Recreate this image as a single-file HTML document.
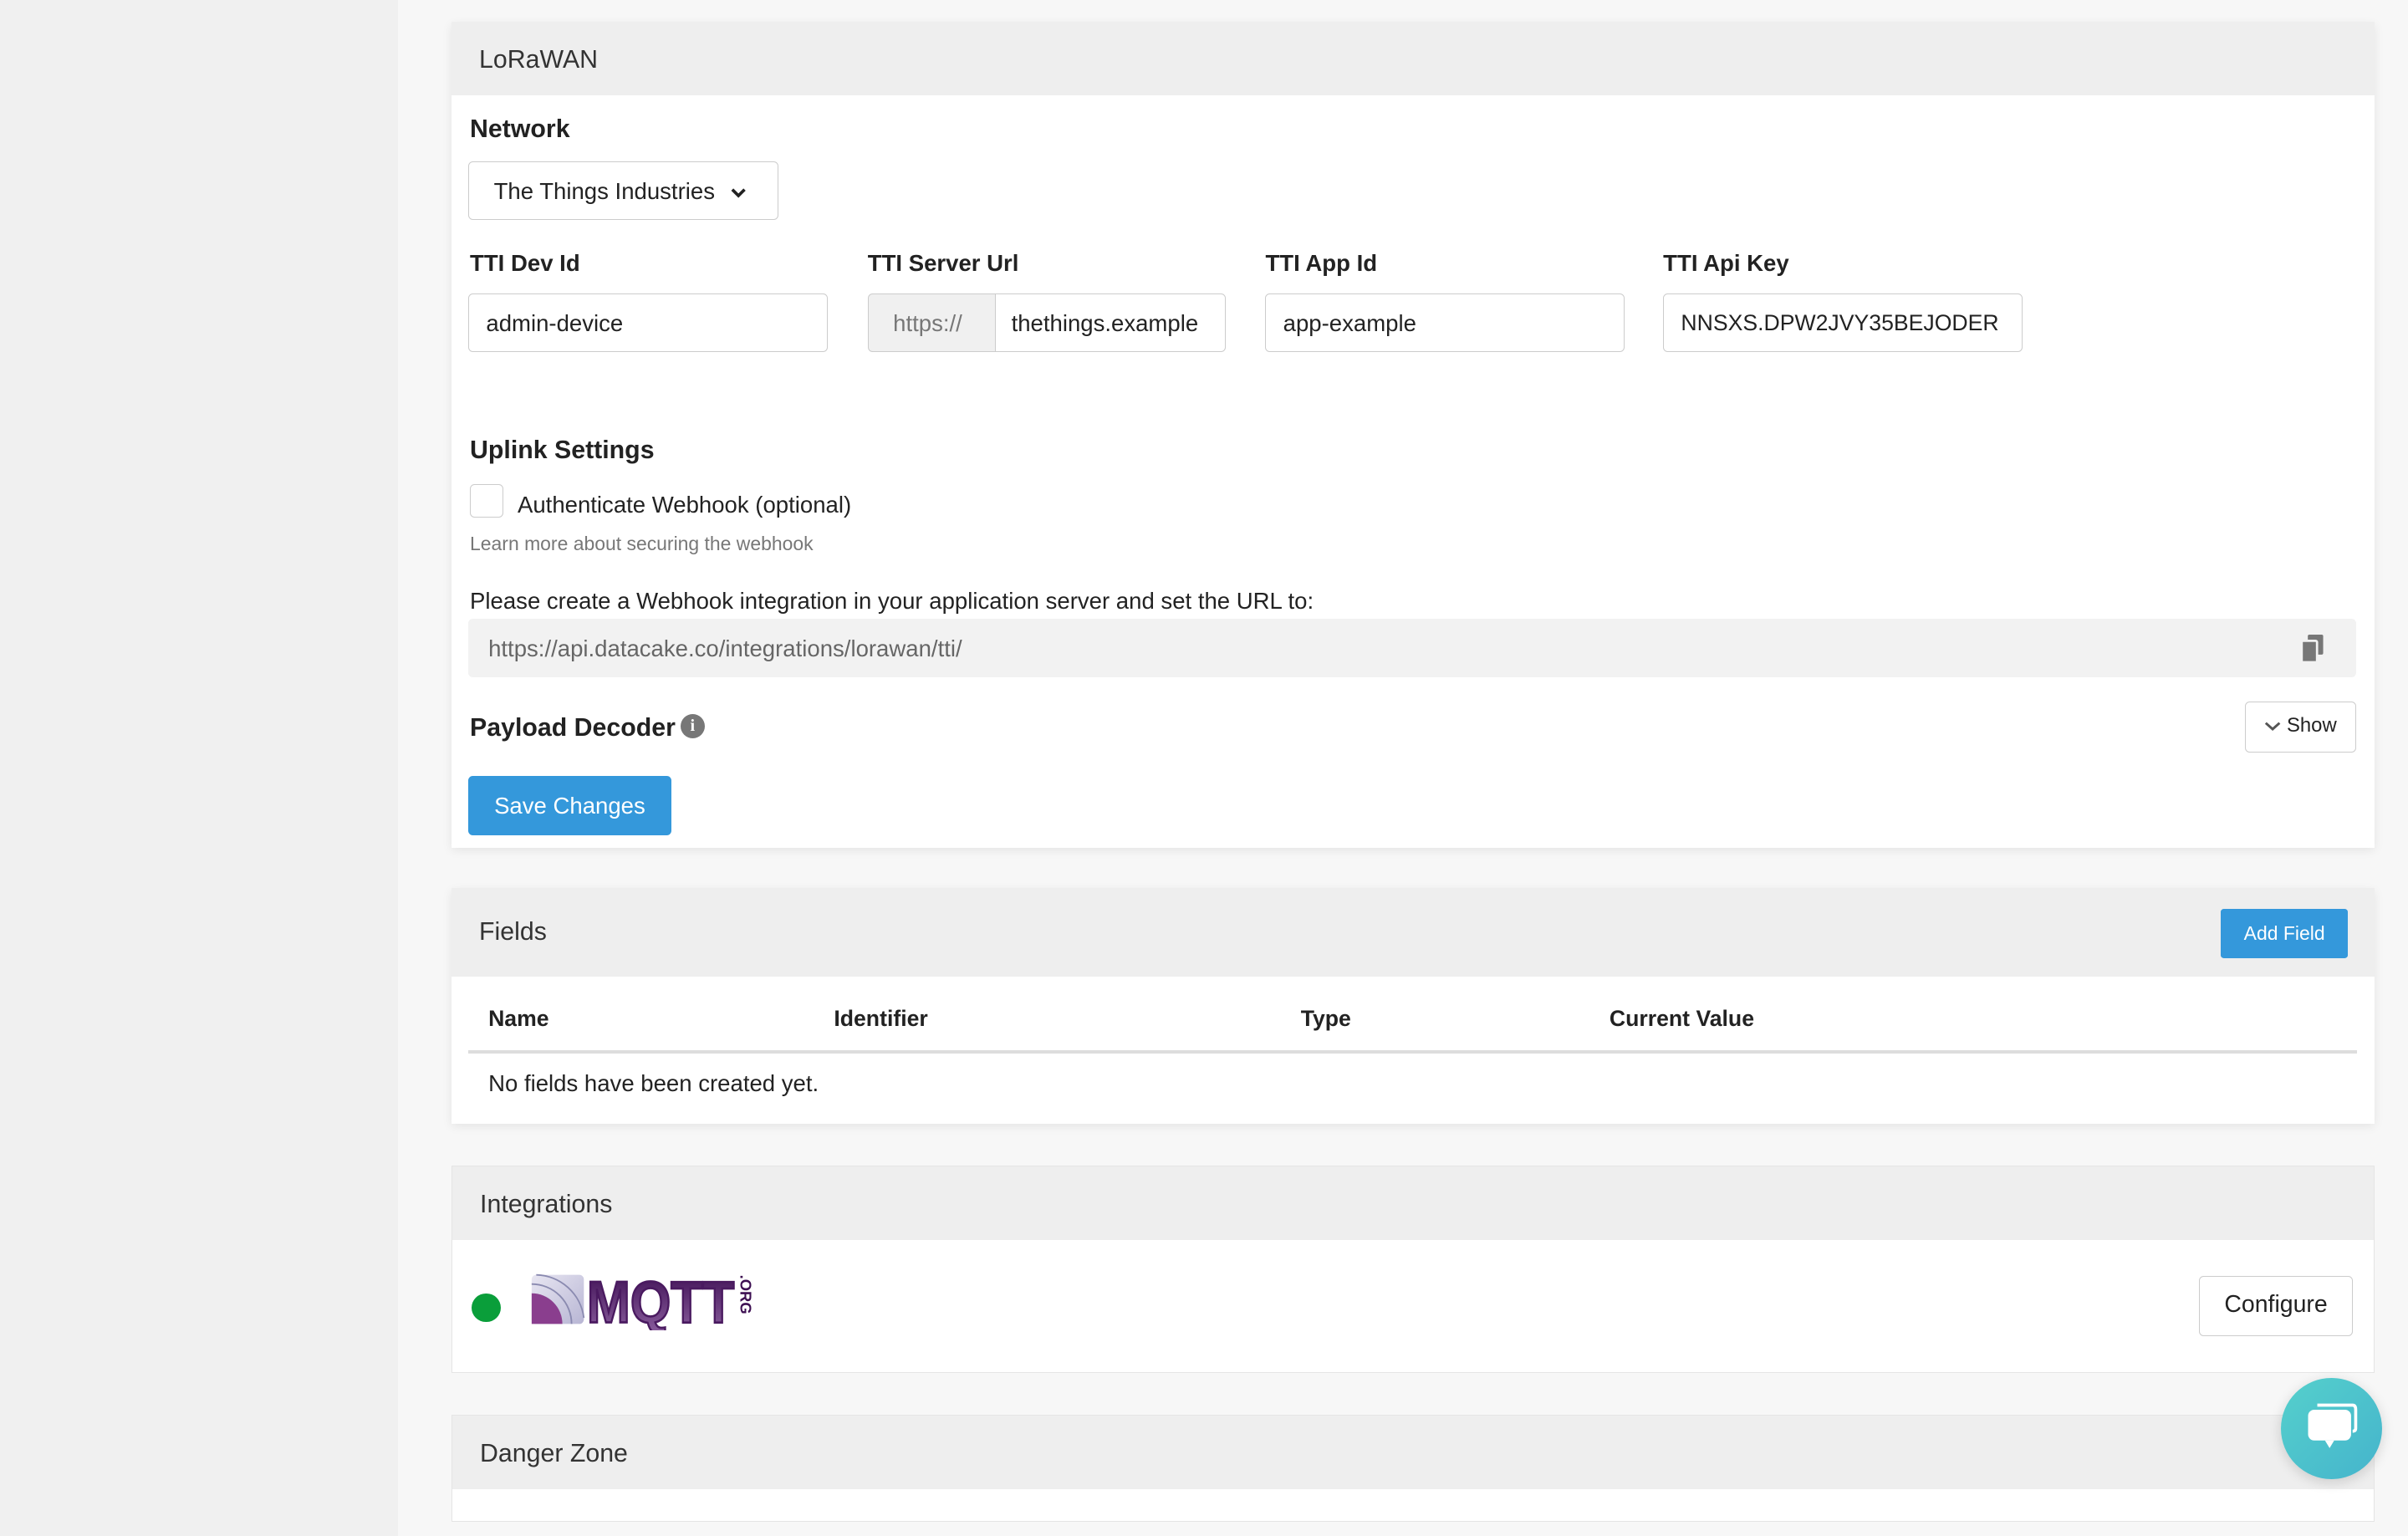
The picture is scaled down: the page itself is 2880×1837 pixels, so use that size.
<!DOCTYPE html>
<html><head><meta charset="utf-8"><style>
html,body{margin:0;padding:0;}
html{background:#f7f7f7;}
body{width:1568px;height:980px;zoom:1.836735;background:#f7f7f7;font-family:"Liberation Sans",Roboto,sans-serif;color:#222;overflow:hidden;position:relative;}
.a{position:absolute;}
.side{left:0;top:0;width:259px;height:1000px;background:#f0f0f0;}
.card{left:294px;width:1252px;background:#fff;box-shadow:0 2px 6px rgba(0,0,0,.08);}
.hd{position:absolute;left:0;top:0;right:0;background:#eee;font-size:16.5px;color:#333;padding-left:18px;box-sizing:border-box;}
.lbl{font-weight:bold;font-size:15px;color:#222;}
.inp{border:1px solid #ccc;border-radius:3px;height:38px;box-sizing:border-box;font-size:15px;padding:0 11px;line-height:36px;background:#fff;overflow:hidden;white-space:nowrap;}
.th{font-weight:bold;font-size:14.5px;top:655px;}
.t{font-size:15px;}
</style></head><body>
<div class="a side"></div>

<div class="a card" style="top:14px;height:538px;">
 <div class="hd" style="height:48px;line-height:50px;">LoRaWAN</div>
</div>
<div class="a lbl" style="left:306px;top:75px;font-size:16.5px;">Network</div>
<div class="a inp" style="left:305px;top:105px;width:202px;line-height:38px;padding-left:16px;">The Things Industries <svg width="10" height="8" viewBox="0 0 10 8" style="margin-left:6px"><path d="M1 2 L5 6 L9 2" stroke="#222" stroke-width="2" fill="none"/></svg></div>
<div class="a lbl" style="left:306px;top:163px;">TTI Dev Id</div>
<div class="a lbl" style="left:565px;top:163px;">TTI Server Url</div>
<div class="a lbl" style="left:824px;top:163px;">TTI App Id</div>
<div class="a lbl" style="left:1083px;top:163px;">TTI Api Key</div>
<div class="a inp" style="left:305px;top:191px;width:234px;line-height:38px;">admin-device</div>
<div class="a inp" style="left:565px;top:191px;width:84px;background:#f0f0f0;color:#777;border-radius:3px 0 0 3px;padding-left:16px;line-height:38px;">https://</div>
<div class="a inp" style="left:648px;top:191px;width:150px;border-radius:0 3px 3px 0;padding:0 10px;line-height:38px;">thethings.example</div>
<div class="a inp" style="left:824px;top:191px;width:234px;line-height:38px;">app-example</div>
<div class="a inp" style="left:1083px;top:191px;width:234px;line-height:38px;font-size:14.5px;">NNSXS.DPW2JVY35BEJODER</div>
<div class="a lbl" style="left:306px;top:284px;font-size:16.5px;">Uplink Settings</div>
<div class="a" style="left:306px;top:315px;width:22px;height:22px;border:1px solid #ccc;border-radius:3px;box-sizing:border-box;"></div>
<div class="a t" style="left:337px;top:320px;">Authenticate Webhook (optional)</div>
<div class="a" style="left:306px;top:347px;font-size:12.5px;color:#777;">Learn more about securing the webhook</div>
<div class="a t" style="left:306px;top:383px;">Please create a Webhook integration in your application server and set the URL to:</div>
<div class="a" style="left:305px;top:403px;width:1229px;height:38px;background:#f2f2f2;border-radius:3px;"></div>
<div class="a t" style="left:318px;top:414px;color:#666;">https://api.datacake.co/integrations/lorawan/tti/</div>
<svg class="a" style="left:1498px;top:413px" width="16" height="18" viewBox="0 0 16 18"><rect x="5" y="0" width="10" height="13" rx="1" fill="#777"/><rect x="1" y="4" width="10" height="14" rx="1" fill="#777" stroke="#f2f2f2" stroke-width="1.5"/></svg>
<div class="a lbl" style="left:306px;top:465px;font-size:16.5px;">Payload Decoder</div>
<div class="a" style="left:443px;top:465px;width:16px;height:16px;border-radius:50%;background:#777;color:#fff;font-size:11px;font-weight:bold;text-align:center;line-height:16px;font-family:'Liberation Serif',serif;">i</div>
<div class="a" style="left:1462px;top:457px;width:72px;height:33px;border:1px solid #ccc;border-radius:3px;box-sizing:border-box;font-size:13px;line-height:31px;text-align:center;"><svg width="11" height="8" viewBox="0 0 11 8"><path d="M1 2 L5.5 6 L10 2" stroke="#555" stroke-width="1.6" fill="none"/></svg> Show</div>
<div class="a" style="left:305px;top:505px;width:132px;height:39px;background:#3498db;border-radius:3px;color:#fff;font-size:15px;text-align:center;line-height:39px;">Save Changes</div>

<div class="a card" style="top:578px;height:154px;">
 <div class="hd" style="height:58px;line-height:58px;">Fields</div>
</div>
<div class="a" style="left:1446px;top:592px;width:83px;height:32px;background:#3498db;border-radius:2px;color:#fff;font-size:12.5px;text-align:center;line-height:32px;">Add Field</div>
<div class="a th" style="left:318px;">Name</div>
<div class="a th" style="left:543px;">Identifier</div>
<div class="a th" style="left:847px;">Type</div>
<div class="a th" style="left:1048px;">Current Value</div>
<div class="a" style="left:305px;top:684px;width:1230px;height:2px;background:#ddd;"></div>
<div class="a t" style="left:318px;top:697px;">No fields have been created yet.</div>

<div class="a card" style="top:759px;height:135px;box-shadow:none;border:1px solid #e5e5e5;box-sizing:border-box;">
 <div class="hd" style="height:48px;line-height:50px;">Integrations</div>
</div>
<div class="a" style="left:307px;top:842px;width:19px;height:19px;border-radius:50%;background:#0a9e3a;"></div>
<svg class="a" style="left:345px;top:828px" width="147" height="38" viewBox="0 0 147 38">
<defs><linearGradient id="g" x1="0" y1="0" x2="0" y2="1"><stop offset="0" stop-color="#3d0f52"/><stop offset="1" stop-color="#8c5fa0"/></linearGradient>
<linearGradient id="b" x1="0" y1="0" x2="1" y2="1"><stop offset="0" stop-color="#e8e6f2"/><stop offset="1" stop-color="#b8b6d4"/></linearGradient></defs>
<rect x="1" y="2" width="34" height="32" rx="3" fill="url(#b)"/>
<path d="M1 14 A20 20 0 0 1 21 34 L1 34Z" fill="#8a3e8e"/>
<path d="M1 8 A26 26 0 0 1 27 34 M4 2 A32 32 0 0 1 35 30" stroke="#8a8ab0" fill="none" stroke-width="1"/>
<g transform="translate(37,33) scale(1,1.2)"><text x="0" y="0" font-family="Liberation Sans" font-weight="bold" font-size="32" fill="url(#g)" stroke="#4a1a60" stroke-width="1.2" textLength="96" lengthAdjust="spacingAndGlyphs">MQTT</text></g>
<text x="0" y="0" transform="translate(137,2) rotate(90)" font-family="Liberation Sans" font-weight="bold" font-size="10" fill="#3d0f52">.ORG</text>
</svg>
<div class="a" style="left:1432px;top:831px;width:100px;height:39px;border:1px solid #ccc;border-radius:3px;box-sizing:border-box;font-size:15.5px;line-height:37px;text-align:center;">Configure</div>

<div class="a card" style="top:921px;height:70px;box-shadow:none;border:1px solid #e5e5e5;box-sizing:border-box;">
 <div class="hd" style="height:48px;line-height:50px;">Danger Zone</div>
</div>
<div class="a" style="left:1485px;top:897px;width:66px;height:66px;border-radius:50%;background:linear-gradient(135deg,#55d0cc,#45b4cc);box-shadow:0 2px 8px rgba(0,0,0,.15);"></div>
<svg class="a" style="left:1500px;top:912px" width="36" height="36" viewBox="0 0 36 36"><path d="M9 3 H32 Q34 3 34 6 V18 Q34 20 32 20" fill="none" stroke="#fff" stroke-width="2"/><rect x="3" y="6" width="28" height="20" rx="4" fill="#fff"/><path d="M14 26 L17 31 L20 26Z" fill="#fff"/></svg>
</body></html>
